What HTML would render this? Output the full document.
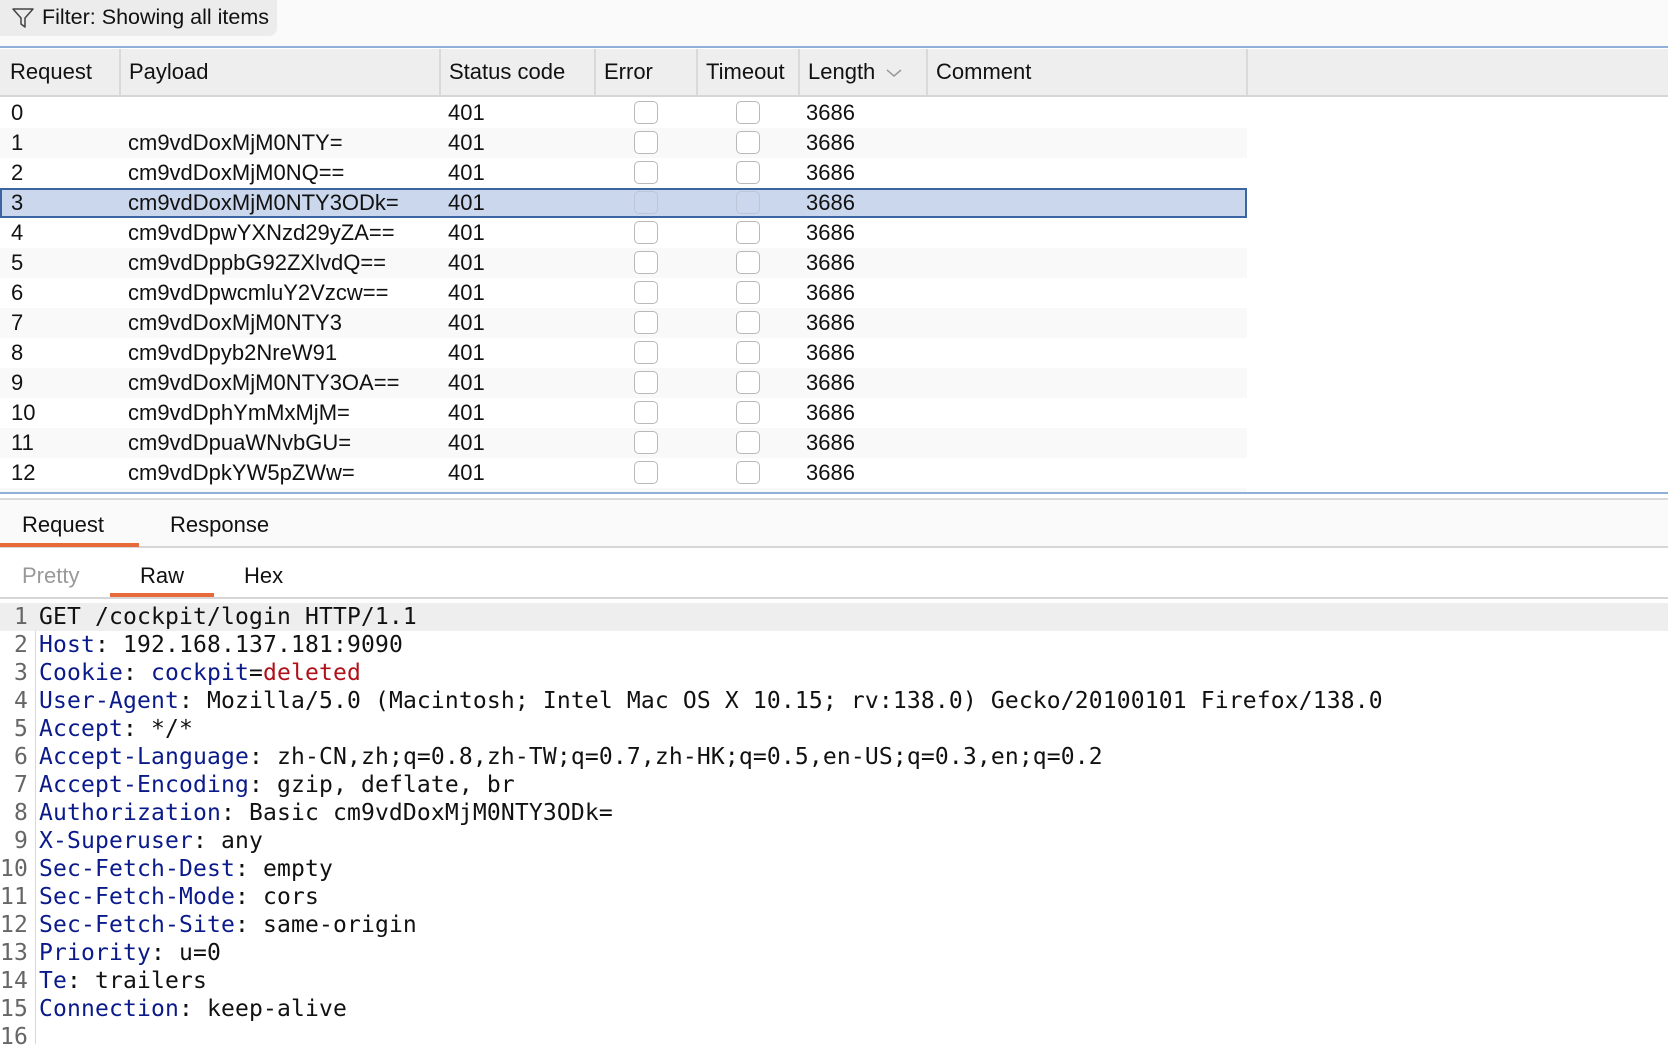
<!DOCTYPE html>
<html><head><meta charset="utf-8"><style>
*{margin:0;padding:0;box-sizing:border-box}
body{width:1668px;height:1044px;overflow:hidden;background:#fff;font-family:"Liberation Sans",Arial,sans-serif;color:#111;position:relative}
.top{position:absolute;left:0;top:0;width:1668px;height:47px;background:#fafafa}
.filter{position:absolute;left:0;top:0;width:277px;height:36px;background:#ececec;border-radius:0 0 8px 0;font-size:21.5px;line-height:34px;padding-left:42px;white-space:nowrap}
.filter svg{position:absolute;left:11px;top:7px}
.blue{position:absolute;left:0;width:1668px;height:2px;background:#8fb0d8}
.hdr{position:absolute;left:0;top:49px;width:1668px;height:48px;background:#eeeeee;border-bottom:2px solid #d6d6d6}
.hc{position:absolute;top:0;height:46px;line-height:46px;font-size:22px;padding-left:8px;border-right:2px solid #d9d9d9;white-space:nowrap}
.row{position:absolute;left:0;width:1247px;height:30px;font-size:22px;line-height:30px;white-space:nowrap}
.row.alt{background:#f9f9f9}
.row.sel{background:#cad7ed;outline:2px solid #3a65a0;outline-offset:-2px}
.row span{position:absolute;top:0}
.cb{position:absolute;top:3px;width:24px;height:23px;border:1.5px solid #b9b9b9;border-radius:5px;background:#fff}
.sel .cb{background:#cad7ed;border-color:#bcc6d6}
.tabs{position:absolute;left:0;top:498px;width:1668px;height:50px;background:#fafafa;border-top:2px solid #dadada;border-bottom:2px solid #d6d6d6}
.t{position:absolute;font-size:22px}
.ul{position:absolute;height:4px;background:#e8693a}
.sub{position:absolute;left:0;top:548px;width:1668px;height:51px;background:#fff;border-bottom:2px solid #d6d6d6}
.code{position:absolute;left:0;top:603px;width:1668px;font-family:"DejaVu Sans Mono","Liberation Mono",monospace;font-size:23px;letter-spacing:0.15px}
.ln{height:28px;line-height:28px;white-space:pre;position:relative}
.ln .n{position:absolute;left:0;width:28px;text-align:right;color:#666}
.ln .c{position:absolute;left:39px}
.k{color:#0a1a8a}.r{color:#b0101a}
.gut{position:absolute;left:35px;top:603px;width:1px;height:441px;background:#d8d8d8}
</style></head><body>
<div class="top"></div>
<div class="filter"><svg width="24" height="22" viewBox="0 0 24 22"><path d="M2 2 H22 L14 11 V20 L10 17 V11 Z" fill="none" stroke="#444" stroke-width="1.5" stroke-linejoin="round"/></svg>Filter: Showing all items</div>
<div class="blue" style="top:46px"></div>
<div class="hdr">
<div class="hc" style="left:0;width:121px;padding-left:10px">Request</div>
<div class="hc" style="left:121px;width:320px">Payload</div>
<div class="hc" style="left:441px;width:155px">Status code</div>
<div class="hc" style="left:596px;width:102px">Error</div>
<div class="hc" style="left:698px;width:102px">Timeout</div>
<div class="hc" style="left:800px;width:128px">Length <svg width="18" height="12" viewBox="0 0 18 12" style="margin-left:4px"><path d="M2 3 L9 9 L16 3" fill="none" stroke="#999" stroke-width="1.5"/></svg></div>
<div class="hc" style="left:928px;width:320px">Comment</div>
</div>
<div class="blue" style="top:492px"></div>
<div class="tabs">
<div class="t" style="left:22px;top:12px">Request</div>
<div class="t" style="left:170px;top:12px">Response</div>
<div class="ul" style="left:0;top:43px;width:139px"></div>
</div>
<div class="sub">
<div class="t" style="left:22px;top:15px;color:#999">Pretty</div>
<div class="t" style="left:140px;top:15px">Raw</div>
<div class="t" style="left:244px;top:15px">Hex</div>
<div class="ul" style="left:110px;top:45px;width:104px"></div>
</div>
<div class="gut"></div>
<div class="code">
<div class="ln" style="background:#eeeeee"><span class="n">1</span><span class="c">GET /cockpit/login HTTP/1.1</span></div>
<div class="ln"><span class="n">2</span><span class="c"><span class="k">Host</span>: 192.168.137.181:9090</span></div>
<div class="ln"><span class="n">3</span><span class="c"><span class="k">Cookie</span>: <span class="k">cockpit</span>=<span class="r">deleted</span></span></div>
<div class="ln"><span class="n">4</span><span class="c"><span class="k">User-Agent</span>: Mozilla/5.0 (Macintosh; Intel Mac OS X 10.15; rv:138.0) Gecko/20100101 Firefox/138.0</span></div>
<div class="ln"><span class="n">5</span><span class="c"><span class="k">Accept</span>: */*</span></div>
<div class="ln"><span class="n">6</span><span class="c"><span class="k">Accept-Language</span>: zh-CN,zh;q=0.8,zh-TW;q=0.7,zh-HK;q=0.5,en-US;q=0.3,en;q=0.2</span></div>
<div class="ln"><span class="n">7</span><span class="c"><span class="k">Accept-Encoding</span>: gzip, deflate, br</span></div>
<div class="ln"><span class="n">8</span><span class="c"><span class="k">Authorization</span>: Basic cm9vdDoxMjM0NTY3ODk=</span></div>
<div class="ln"><span class="n">9</span><span class="c"><span class="k">X-Superuser</span>: any</span></div>
<div class="ln"><span class="n">10</span><span class="c"><span class="k">Sec-Fetch-Dest</span>: empty</span></div>
<div class="ln"><span class="n">11</span><span class="c"><span class="k">Sec-Fetch-Mode</span>: cors</span></div>
<div class="ln"><span class="n">12</span><span class="c"><span class="k">Sec-Fetch-Site</span>: same-origin</span></div>
<div class="ln"><span class="n">13</span><span class="c"><span class="k">Priority</span>: u=0</span></div>
<div class="ln"><span class="n">14</span><span class="c"><span class="k">Te</span>: trailers</span></div>
<div class="ln"><span class="n">15</span><span class="c"><span class="k">Connection</span>: keep-alive</span></div>
<div class="ln"><span class="n">16</span><span class="c"></span></div>
</div>
<div class="row" style="top:98px"><span style="left:11px">0</span><span style="left:448px">401</span><div class="cb" style="left:634px"></div><div class="cb" style="left:736px"></div><span style="left:806px">3686</span></div>
<div class="row alt" style="top:128px"><span style="left:11px">1</span><span style="left:128px">cm9vdDoxMjM0NTY=</span><span style="left:448px">401</span><div class="cb" style="left:634px"></div><div class="cb" style="left:736px"></div><span style="left:806px">3686</span></div>
<div class="row" style="top:158px"><span style="left:11px">2</span><span style="left:128px">cm9vdDoxMjM0NQ==</span><span style="left:448px">401</span><div class="cb" style="left:634px"></div><div class="cb" style="left:736px"></div><span style="left:806px">3686</span></div>
<div class="row sel" style="top:188px"><span style="left:11px">3</span><span style="left:128px">cm9vdDoxMjM0NTY3ODk=</span><span style="left:448px">401</span><div class="cb" style="left:634px"></div><div class="cb" style="left:736px"></div><span style="left:806px">3686</span></div>
<div class="row" style="top:218px"><span style="left:11px">4</span><span style="left:128px">cm9vdDpwYXNzd29yZA==</span><span style="left:448px">401</span><div class="cb" style="left:634px"></div><div class="cb" style="left:736px"></div><span style="left:806px">3686</span></div>
<div class="row alt" style="top:248px"><span style="left:11px">5</span><span style="left:128px">cm9vdDppbG92ZXlvdQ==</span><span style="left:448px">401</span><div class="cb" style="left:634px"></div><div class="cb" style="left:736px"></div><span style="left:806px">3686</span></div>
<div class="row" style="top:278px"><span style="left:11px">6</span><span style="left:128px">cm9vdDpwcmluY2Vzcw==</span><span style="left:448px">401</span><div class="cb" style="left:634px"></div><div class="cb" style="left:736px"></div><span style="left:806px">3686</span></div>
<div class="row alt" style="top:308px"><span style="left:11px">7</span><span style="left:128px">cm9vdDoxMjM0NTY3</span><span style="left:448px">401</span><div class="cb" style="left:634px"></div><div class="cb" style="left:736px"></div><span style="left:806px">3686</span></div>
<div class="row" style="top:338px"><span style="left:11px">8</span><span style="left:128px">cm9vdDpyb2NreW91</span><span style="left:448px">401</span><div class="cb" style="left:634px"></div><div class="cb" style="left:736px"></div><span style="left:806px">3686</span></div>
<div class="row alt" style="top:368px"><span style="left:11px">9</span><span style="left:128px">cm9vdDoxMjM0NTY3OA==</span><span style="left:448px">401</span><div class="cb" style="left:634px"></div><div class="cb" style="left:736px"></div><span style="left:806px">3686</span></div>
<div class="row" style="top:398px"><span style="left:11px">10</span><span style="left:128px">cm9vdDphYmMxMjM=</span><span style="left:448px">401</span><div class="cb" style="left:634px"></div><div class="cb" style="left:736px"></div><span style="left:806px">3686</span></div>
<div class="row alt" style="top:428px"><span style="left:11px">11</span><span style="left:128px">cm9vdDpuaWNvbGU=</span><span style="left:448px">401</span><div class="cb" style="left:634px"></div><div class="cb" style="left:736px"></div><span style="left:806px">3686</span></div>
<div class="row" style="top:458px"><span style="left:11px">12</span><span style="left:128px">cm9vdDpkYW5pZWw=</span><span style="left:448px">401</span><div class="cb" style="left:634px"></div><div class="cb" style="left:736px"></div><span style="left:806px">3686</span></div>
<div class="row alt" style="top:488px;height:4px;overflow:hidden"></div>
</body></html>
